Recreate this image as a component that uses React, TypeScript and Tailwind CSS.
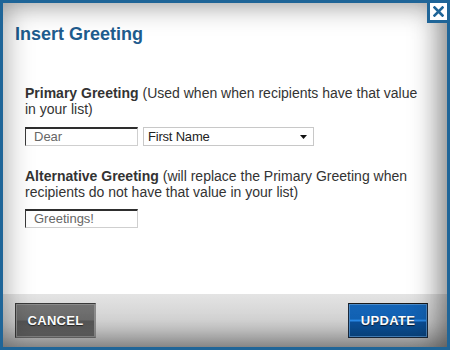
import React from "react";

const font = { fontFamily: '"Liberation Sans", Arial, sans-serif' };

function CloseIcon() {
  return (
    <svg width="11" height="11" viewBox="0 0 11 11">
      <path d="M1.5 1.5 L9.5 9.5 M9.5 1.5 L1.5 9.5" stroke="#1f6598" strokeWidth="2.6" strokeLinecap="square" />
    </svg>
  );
}

export default function App() {
  return (
    <div className="w-[450px] h-[350px] bg-[#1f6598] p-[3px] relative" style={font}>
      <div className="relative flex flex-col h-full bg-white overflow-hidden">
        <div className="pt-[20px] pl-[12px]">
          <h1 className="text-[18px] leading-[22px] font-bold text-[#1e5c8e]">Insert Greeting</h1>
        </div>
        <div className="flex-1 pl-[22px] pr-[20px] text-[14px] leading-[16px] text-[#333]">
          <p className="mt-[40px]">
            <span className="font-bold">Primary Greeting</span> (Used when when recipients have that value in your list)
          </p>
          <div className="flex gap-[5px] mt-[10px]">
            <div className="w-[113px] h-[19px] bg-white border border-t-2 border-t-[#2e2e2e] border-l-[#3a3a3a] border-r-[#cfcfcf] border-b-[#cfcfcf] pl-[8px] text-[13px] leading-[16px] text-[#666]">
              Dear
            </div>
            <div className="w-[171px] h-[19px] bg-white border border-[#c8c8c8] pl-[4px] pr-[6px] flex items-center justify-between text-[13px] text-[#222]">
              <span className="tracking-[-0.2px]">First Name</span>
              <svg width="7" height="4" viewBox="0 0 7 4"><path d="M0 0 H7 L3.5 4 Z" fill="#111" /></svg>
            </div>
          </div>
          <p className="mt-[22px]">
            <span className="font-bold">Alternative Greeting</span> (will replace the Primary Greeting when recipients do not have that value in your list)
          </p>
          <div className="mt-[9px] w-[113px] h-[19px] bg-white border border-t-2 border-t-[#2e2e2e] border-l-[#3a3a3a] border-r-[#cfcfcf] border-b-[#cfcfcf] pl-[8px] text-[13px] leading-[16px] text-[#666]">
            Greetings!
          </div>
        </div>
        <div className="h-[53px] flex items-center justify-between pl-[12px] pr-[19px] bg-gradient-to-b from-[#e4e4e4] via-[#d2d2d2] to-[#b0b0b0]">
          <button className="w-[81px] h-[35px] border border-[#3a3a3a] border-r-[#8a8a8a] border-b-[#6a6a6a] bg-[linear-gradient(to_bottom,#737373_0%,#6a6a6a_48%,#555_52%,#626262_100%)] shadow-[inset_0_0_0_1px_#8c8c8c] text-white font-bold text-[13px] tracking-[0.3px] [text-shadow:0_1px_1px_#222]">
            CANCEL
          </button>
          <button className="w-[80px] h-[35px] border border-[#1c2a3c] border-t-[#1a1a1a] bg-[linear-gradient(to_bottom,#1464b6_0%,#1262b4_45%,#2a8ae8_50%,#0b4f98_56%,#0a4886_100%)] shadow-[inset_0_0_0_1px_#4a8ac8] text-white font-bold text-[13px] tracking-[0.3px] [text-shadow:0_1px_1px_#0a1a30]">
            UPDATE
          </button>
        </div>
        <div className="pointer-events-none absolute inset-0 shadow-[inset_0_0_30px_rgba(0,0,0,0.4),inset_-22px_0_30px_-12px_rgba(0,0,0,0.25)]" />
      </div>
      <div className="absolute top-0 right-0 w-[23px] h-[23px] bg-[#1f6598] p-[3px]">
        <div className="w-[17px] h-[17px] bg-white flex items-center justify-center">
          <CloseIcon />
        </div>
      </div>
    </div>
  );
}
